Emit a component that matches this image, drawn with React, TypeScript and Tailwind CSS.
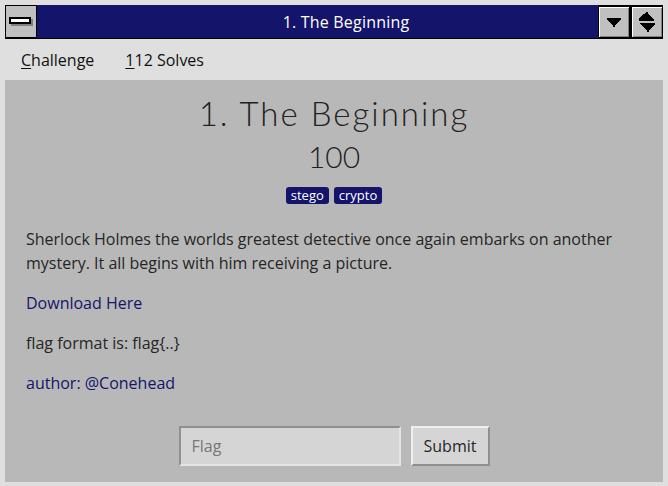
import { useState } from 'react'

function DownArrow() {
  return (
    <svg width="14" height="9" viewBox="0 0 14 9" shapeRendering="crispEdges">
      <path d="M0 0h14v2h-1v1h-1v1h-1v1h-1v1h-1v1h-1v2h-2v-2h-1v-1h-1v-1h-1v-1h-1v-1h-1v-1h-1z" fill="#000" />
    </svg>
  )
}

function UpDownArrow() {
  return (
    <svg width="16" height="20" viewBox="0 0 16 20" shapeRendering="crispEdges">
      <path d="M7 0h2v2h1v1h1v1h1v1h1v1h1v1h1v2h-16v-2h1v-1h1v-1h1v-1h1v-1h1v-1h1z" fill="#000" />
      <path d="M0 11h16v2h-1v1h-1v1h-1v1h-1v1h-1v1h-1v2h-2v-2h-1v-1h-1v-1h-1v-1h-1v-1h-1v-1h-1z" fill="#000" />
    </svg>
  )
}

function TitleButton({ children }: { children: React.ReactNode }) {
  return (
    <div className="w-[32px] h-[32px] border border-black bg-[#c0c0c0] flex items-center justify-center shadow-[inset_1px_1px_0_#ffffff,inset_-1px_-1px_0_#808080]">
      {children}
    </div>
  )
}

export default function App() {
  const [flag, setFlag] = useState('')

  return (
    <div className="h-[486px] w-[668px] bg-[#dfdfdf] px-[5px] pt-[5px] pb-[4px] flex flex-col font-['Open_Sans','Noto_Sans',sans-serif] overflow-hidden">
      {/* title bar */}
      <div className="relative h-[34px] bg-[#14146b] border-b border-black flex items-center justify-between">
        <div className="w-[32px] h-[33px] border border-black bg-[#c0c0c0] flex items-center justify-center">
          <div className="relative w-[22px] h-[7px] ml-[-2px] mt-[-2px]">
            <div className="absolute left-[2px] top-[2px] w-[22px] h-[7px] bg-[#808080]" />
            <div className="absolute inset-0 bg-white border-2 border-black" />
          </div>
        </div>
        <span className="absolute inset-0 pl-[24px] flex items-center justify-center text-white text-[16px] tracking-[0.2px] pointer-events-none">
          1. The Beginning
        </span>
        <div className="flex gap-[1px] h-full items-start pt-[1px] bg-black">
          <TitleButton><DownArrow /></TitleButton>
          <TitleButton><UpDownArrow /></TitleButton>
        </div>
      </div>

      {/* menu */}
      <div className="h-[41px] flex items-center gap-[31px] pl-[16px] text-[16px] text-[#111]">
        <span><span className="underline underline-offset-2">C</span>hallenge</span>
        <span><span className="underline underline-offset-2">1</span>12 Solves</span>
      </div>

      {/* content */}
      <div className="flex-1 bg-[#b8b8b8] flex flex-col px-[21px] pt-[10px]">
        <h2 className="text-center text-[33px] font-light tracking-[2px] text-[#222] font-['Lato',sans-serif] leading-[46px]">
          1. The Beginning
        </h2>
        <h3 className="text-center text-[30px] font-light text-[#222] font-['Lato',sans-serif] leading-[38px] mt-[1px]">
          100
        </h3>
        <div className="flex justify-center gap-[5px] mt-[12px]">
          <span className="bg-[#14146b] text-white text-[13px] leading-[17px] px-[5px] rounded-[3px]">stego</span>
          <span className="bg-[#14146b] text-white text-[13px] leading-[17px] px-[5px] rounded-[3px]">crypto</span>
        </div>
        <p className="mt-[23px] text-[16px] leading-[24px] text-[#262626]">
          Sherlock Holmes the worlds greatest detective once again embarks on another mystery. It all begins with him receiving a picture.
        </p>
        <p className="mt-[16px] text-[16px] leading-[24px] text-[#14146b]">Download Here</p>
        <p className="mt-[16px] text-[16px] leading-[24px] text-[#262626]">flag format is: flag{'{..}'}</p>
        <p className="mt-[16px] text-[16px] leading-[24px] text-[#14146b]">author: @Conehead</p>
        <div className="flex justify-center gap-[10px] mt-[31px]">
          <input
            value={flag}
            onChange={e => setFlag(e.target.value)}
            placeholder="Flag"
            className="w-[222px] h-[40px] bg-[#d6d5d6] border-2 border-t-[#8f8f8f] border-l-[#8f8f8f] border-b-[#e4e4e4] border-r-[#e4e4e4] px-[11px] text-[16px] placeholder:text-[#777] outline-none"
          />
          <button className="w-[79px] h-[40px] bg-[#d6d5d6] border-2 border-t-[#efefef] border-l-[#efefef] border-b-[#8f8f8f] border-r-[#8f8f8f] text-[16px] text-[#262626]">
            Submit
          </button>
        </div>
      </div>
    </div>
  )
}
